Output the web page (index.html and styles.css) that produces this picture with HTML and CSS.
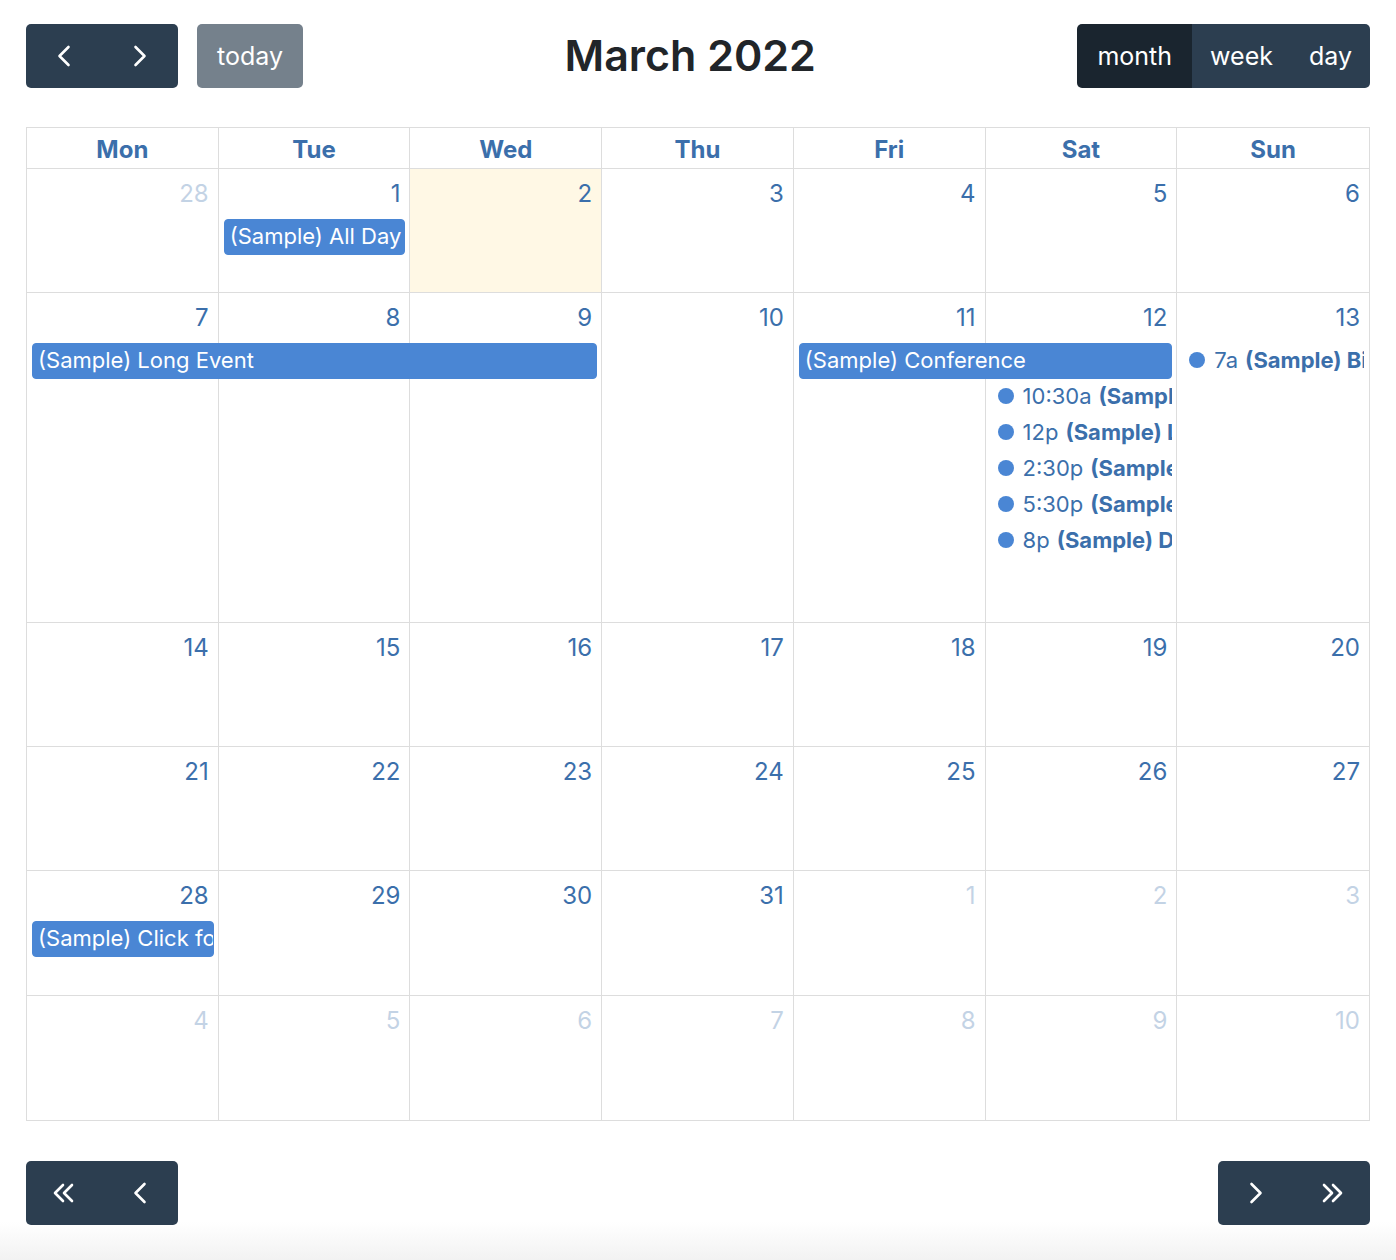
FILE: index.html
```html
<!DOCTYPE html>
<html lang="en">
<head>
  <meta charset="UTF-8">
  <meta name="viewport" content="width=device-width, initial-scale=1.0">
  <title>Calendar</title>
  <link rel="stylesheet" href="styles.css">
</head>
<body>
  <div class="calendar">
    <div class="toolbar">
      <div class="toolbar-chunk">
        <div class="btn-group">
          <button class="btn" aria-label="prev">
            <svg class="icon" width="14" height="22" viewBox="0 0 14 22"><path d="M11.5 2 L2.5 11 L11.5 20"/></svg>
          </button>
          <button class="btn" aria-label="next">
            <svg class="icon" width="14" height="22" viewBox="0 0 14 22"><path d="M2.5 2 L11.5 11 L2.5 20"/></svg>
          </button>
        </div>
        <button class="btn btn-today" disabled>today</button>
      </div>
      <h2 class="toolbar-title">March 2022</h2>
      <div class="toolbar-chunk">
        <div class="btn-group">
          <button class="btn btn-view active">month</button>
          <button class="btn btn-view">week</button>
          <button class="btn btn-view">day</button>
        </div>
      </div>
    </div>

    <div class="grid">
      <div class="head-row">
        <div class="head-cell">Mon</div>
        <div class="head-cell">Tue</div>
        <div class="head-cell">Wed</div>
        <div class="head-cell">Thu</div>
        <div class="head-cell">Fri</div>
        <div class="head-cell">Sat</div>
        <div class="head-cell">Sun</div>
      </div>

      <div class="week">
        <div class="day other"><span class="day-number">28</span></div>
        <div class="day"><span class="day-number">1</span></div>
        <div class="day today"><span class="day-number">2</span></div>
        <div class="day"><span class="day-number">3</span></div>
        <div class="day"><span class="day-number">4</span></div>
        <div class="day"><span class="day-number">5</span></div>
        <div class="day"><span class="day-number">6</span></div>
        <a class="event block c2 r2">(Sample) All Day</a>
      </div>

      <div class="week week-tall">
        <div class="day"><span class="day-number">7</span></div>
        <div class="day"><span class="day-number">8</span></div>
        <div class="day"><span class="day-number">9</span></div>
        <div class="day"><span class="day-number">10</span></div>
        <div class="day"><span class="day-number">11</span></div>
        <div class="day"><span class="day-number">12</span></div>
        <div class="day"><span class="day-number">13</span></div>
        <a class="event block c1 span3 r2">(Sample) Long Event</a>
        <a class="event block c5 span2 r2">(Sample) Conference</a>
        <a class="event dot c7 r2"><span class="dot-mark"></span><span class="ev-time">7a</span> <b>(Sample) Birthday Party</b></a>
        <a class="event dot c6 r3"><span class="dot-mark"></span><span class="ev-time">10:30a</span> <b>(Sample) Meeting</b></a>
        <a class="event dot c6 r4"><span class="dot-mark"></span><span class="ev-time">12p</span> <b>(Sample) Lunch</b></a>
        <a class="event dot c6 r5"><span class="dot-mark"></span><span class="ev-time">2:30p</span> <b>(Sample) Meeting</b></a>
        <a class="event dot c6 r6"><span class="dot-mark"></span><span class="ev-time">5:30p</span> <b>(Sample) Happy Hour</b></a>
        <a class="event dot c6 r7"><span class="dot-mark"></span><span class="ev-time">8p</span> <b>(Sample) Dinner</b></a>
      </div>

      <div class="week">
        <div class="day"><span class="day-number">14</span></div>
        <div class="day"><span class="day-number">15</span></div>
        <div class="day"><span class="day-number">16</span></div>
        <div class="day"><span class="day-number">17</span></div>
        <div class="day"><span class="day-number">18</span></div>
        <div class="day"><span class="day-number">19</span></div>
        <div class="day"><span class="day-number">20</span></div>
      </div>

      <div class="week">
        <div class="day"><span class="day-number">21</span></div>
        <div class="day"><span class="day-number">22</span></div>
        <div class="day"><span class="day-number">23</span></div>
        <div class="day"><span class="day-number">24</span></div>
        <div class="day"><span class="day-number">25</span></div>
        <div class="day"><span class="day-number">26</span></div>
        <div class="day"><span class="day-number">27</span></div>
      </div>

      <div class="week week-end">
        <div class="day"><span class="day-number">28</span></div>
        <div class="day"><span class="day-number">29</span></div>
        <div class="day"><span class="day-number">30</span></div>
        <div class="day"><span class="day-number">31</span></div>
        <div class="day other"><span class="day-number">1</span></div>
        <div class="day other"><span class="day-number">2</span></div>
        <div class="day other"><span class="day-number">3</span></div>
        <a class="event block c1 r2">(Sample) Click for Google</a>
      </div>

      <div class="week week-end">
        <div class="day other"><span class="day-number">4</span></div>
        <div class="day other"><span class="day-number">5</span></div>
        <div class="day other"><span class="day-number">6</span></div>
        <div class="day other"><span class="day-number">7</span></div>
        <div class="day other"><span class="day-number">8</span></div>
        <div class="day other"><span class="day-number">9</span></div>
        <div class="day other"><span class="day-number">10</span></div>
      </div>
    </div>

    <div class="toolbar toolbar-footer">
      <div class="btn-group">
        <button class="btn" aria-label="prev year">
          <svg class="icon" width="24" height="22" viewBox="0 0 24 22"><path d="M11 3 L3 11 L11 19 M20 3 L12 11 L20 19"/></svg>
        </button>
        <button class="btn" aria-label="prev">
          <svg class="icon" width="14" height="22" viewBox="0 0 14 22"><path d="M11.5 2 L2.5 11 L11.5 20"/></svg>
        </button>
      </div>
      <div class="btn-group">
        <button class="btn" aria-label="next">
          <svg class="icon" width="14" height="22" viewBox="0 0 14 22"><path d="M2.5 2 L11.5 11 L2.5 20"/></svg>
        </button>
        <button class="btn" aria-label="next year">
          <svg class="icon" width="24" height="22" viewBox="0 0 24 22"><path d="M4 3 L12 11 L4 19 M13 3 L21 11 L13 19"/></svg>
        </button>
      </div>
    </div>
  </div>
</body>
</html>
```

FILE: styles.css
```css
html {
  height: 100%;
  background: linear-gradient(to bottom, #fff calc(100% - 38px), #f2f2f2);
}

body {
  font-family: Inter, "Noto Sans", sans-serif;
  font-size: 24px;
  margin: 0;
  padding: 24px 26px 0;
  color: #212529;
}

.toolbar {
  display: flex;
  justify-content: space-between;
  align-items: center;
  margin-bottom: 39px;
}

.toolbar-footer {
  margin: 40px 0 0;
}

.toolbar-chunk {
  display: flex;
  align-items: center;
  gap: 19px;
}

.toolbar-title {
  margin: 0;
  font-size: 43px;
  font-weight: 600;
  line-height: 1.2;
  color: #212529;
}

.btn-group {
  display: flex;
  border-radius: 5px;
  overflow: hidden;
}

.btn {
  display: flex;
  align-items: center;
  justify-content: center;
  height: 64px;
  min-width: 76px;
  padding: 0 19px;
  border: none;
  background: #2c3e50;
  color: #fff;
  font-family: inherit;
  font-size: 25px;
  cursor: pointer;
}

.btn-today {
  border-radius: 5px;
  opacity: 0.65;
  padding: 0 20px;
}

.btn-view {
  min-width: 0;
  padding: 0 18px;
}

.btn.active {
  background: #1a252f;
  padding: 0 20px;
}

.icon {
  fill: none;
  stroke: #fff;
  stroke-width: 2.6;
  stroke-linecap: round;
  stroke-linejoin: round;
}

.grid {
  border: 1px solid #ddd;
}

.head-row,
.week {
  display: grid;
  grid-template-columns: repeat(7, minmax(0, 1fr));
  border-bottom: 1px solid #ddd;
}

.week:last-child {
  border-bottom: none;
}

.head-cell {
  text-align: center;
  font-weight: 700;
  color: #3b6fab;
  line-height: 36px;
  padding: 4px 0 0;
  border-right: 1px solid #ddd;
}

.head-cell:last-child,
.day:nth-child(7) {
  border-right: none;
}

.week {
  grid-template-rows: 50px 36px 1fr;
  min-height: 123px;
}

.week-end {
  min-height: 124px;
}

.week-tall {
  grid-template-rows: 50px repeat(6, 36px) 1fr;
  min-height: 329px;
}

.day {
  grid-row: 1 / -1;
  border-right: 1px solid #ddd;
  text-align: right;
  padding: 7px 9px 0;
}

.day:nth-child(1) { grid-column: 1; }
.day:nth-child(2) { grid-column: 2; }
.day:nth-child(3) { grid-column: 3; }
.day:nth-child(4) { grid-column: 4; }
.day:nth-child(5) { grid-column: 5; }
.day:nth-child(6) { grid-column: 6; }
.day:nth-child(7) { grid-column: 7; }

.day.today {
  background: #fff8e5;
}

.day-number {
  color: #3b6fab;
  line-height: 36px;
}

.day.other .day-number {
  opacity: 0.3;
}

.event {
  min-width: 0;
  height: 34px;
  margin: 0 5px 2px 5px;
  white-space: nowrap;
  overflow: hidden;
  font-size: 22px;
  line-height: 32px;
  cursor: pointer;
}

.event.block {
  background: #4a86d4;
  border: 1px solid #4a86d4;
  border-radius: 4px;
  color: #fff;
  padding: 0 5px;
}

.event.dot {
  display: flex;
  align-items: center;
  color: #3b6fab;
  line-height: 34px;
  padding-left: 7px;
}

.event.dot b {
  font-weight: 700;
  margin-left: 7px;
}

.dot-mark {
  flex: none;
  width: 16px;
  height: 16px;
  border-radius: 50%;
  background: #4a86d4;
  margin-right: 9px;
}

.c1 { grid-column-start: 1; }
.c2 { grid-column-start: 2; }
.c5 { grid-column-start: 5; }
.c6 { grid-column-start: 6; }
.c7 { grid-column-start: 7; }
.span2 { grid-column-end: span 2; }
.span3 { grid-column-end: span 3; }
.r2 { grid-row: 2; }
.r3 { grid-row: 3; }
.r4 { grid-row: 4; }
.r5 { grid-row: 5; }
.r6 { grid-row: 6; }
.r7 { grid-row: 7; }
```
